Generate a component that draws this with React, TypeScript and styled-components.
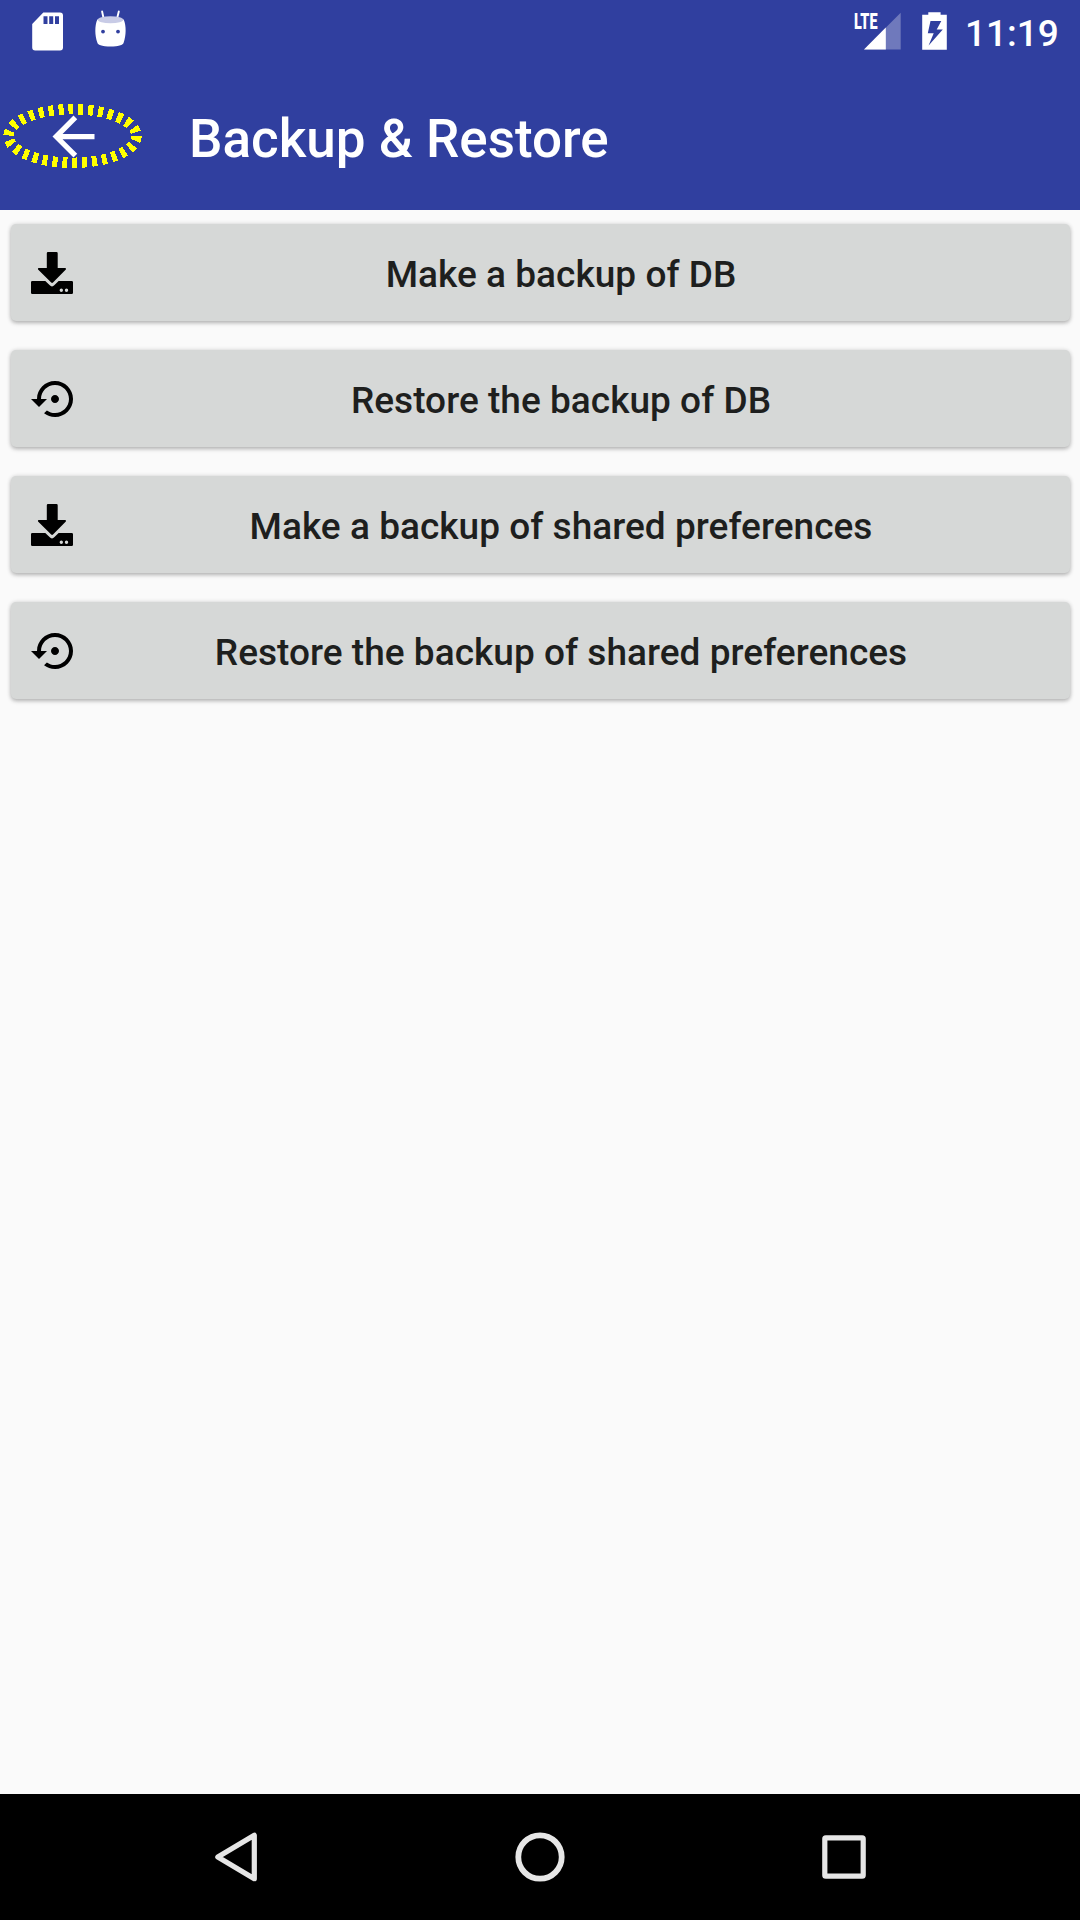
import React from "react";
import styled, { createGlobalStyle } from "styled-components";

const GlobalStyle = createGlobalStyle`
  * { box-sizing: border-box; }
  body { margin: 0; background: #fafafa; }
`;

const Screen = styled.div`
  width: 1080px;
  height: 1920px;
  display: flex;
  flex-direction: column;
  overflow: hidden;
  background: #fafafa;
  font-family: Roboto, "Noto Sans", sans-serif;
  font-weight: 500;
`;

const StatusBar = styled.div`
  height: 63px;
  display: flex;
  align-items: flex-start;
  justify-content: space-between;
  padding: 0 21px 0 31px;
  background: #303f9f;
  color: #fff;
`;

const StatusGroup = styled.div<{ $gap: number }>`
  display: flex;
  gap: ${(p) => p.$gap}px;
`;

const Clock = styled.time`
  width: 94px;
  margin-left: -3px;
  font-size: 37px;
  line-height: 43px;
  padding-top: 12px;
  white-space: nowrap;
`;

const AppBar = styled.header`
  height: 147px;
  display: flex;
  align-items: center;
  background: #303f9f;
  color: #fff;
`;

const BackButton = styled.button`
  position: relative;
  width: 147px;
  height: 147px;
  border: 0;
  padding: 0 0 0 42px;
  background: none;
  color: inherit;
  display: flex;
  align-items: center;
`;

const FocusRing = styled.svg`
  position: absolute;
  left: 0;
  top: 37px;
`;

const Title = styled.h1`
  margin: 0;
  padding: 5px 0 0 42px;
  font-size: 53px;
  line-height: 62px;
  font-weight: 500;
  white-space: nowrap;
`;

const Content = styled.main`
  flex: 1;
  display: flex;
  flex-direction: column;
  gap: 29px;
  padding: 14px 10.5px;
`;

const ActionButton = styled.button`
  height: 97px;
  display: flex;
  align-items: center;
  border: 0;
  border-radius: 5px;
  padding: 0 20.5px;
  background: #d6d8d7;
  color: #1e1f1e;
  font: 500 37px/43px Roboto, "Noto Sans", sans-serif;
  letter-spacing: 0.03px;
  box-shadow: 0 2px 4px rgba(0, 0, 0, 0.26), 0 0 5px rgba(0, 0, 0, 0.1);
`;

const Label = styled.span`
  flex: 1;
  padding-top: 3px;
  text-align: center;
  white-space: nowrap;
`;

const NavBar = styled.nav`
  height: 126px;
  display: flex;
  justify-content: center;
  background: #000;
`;

const NavButton = styled.button`
  width: 304px;
  border: 0;
  padding: 0;
  background: none;
  color: #e6e6e6;
  display: flex;
  align-items: center;
  justify-content: center;
`;

const SdCard = () => (
  <svg width="33" height="63" viewBox="31 0 33 63">
    <path fill="#fff" fillRule="evenodd" d="M43.3 12.4H60a3 3 0 0 1 3 3V47.5a3 3 0 0 1-3 3H35.2a3 3 0 0 1-3-3V24zM43.5 16.3V24h4v-7.7zM49.2 16.3V24h4v-7.7zM55 16.3V24h4v-7.7z" />
  </svg>
);

const AndroidHead = () => (
  <svg width="33" height="63" viewBox="94 0 33 63">
    <path stroke="#fff" strokeWidth="1.9" strokeLinecap="round" d="M102.1 11.5l1.4 6.5M118.8 11.5l-1.6 6.5" />
    <path fill="#fff" d="M97.3 19.5C94.6 26 94.8 35 97.3 42.5c.5 1.4 1.1 2 2.4 2.4 6.8 2.2 14.8 2.2 21.6 0 1.3-.4 1.9-1 2.4-2.4 2.5-7.5 2.7-16.5 0-23z" />
    <ellipse cx="110.5" cy="19.7" rx="12.8" ry="3.5" fill="#c8cbe6" />
    <circle cx="103" cy="31.6" r="1.9" fill="#303f9f" />
    <circle cx="118" cy="31.6" r="1.9" fill="#303f9f" />
  </svg>
);

const NetworkLabel = styled.span`
  position: absolute;
  left: 0;
  top: 9px;
  font: 900 22.5px/24px Roboto, sans-serif;
  transform: scaleX(0.64);
  transform-origin: left;
`;

const Network = styled.div`
  position: relative;
  width: 47px;
`;

const Signal = () => (
  <Network>
    <svg width="47" height="63" viewBox="854 0 47 63">
      <path fill="#6f79bc" d="M900.7 12.7V49.5H864z" />
      <path fill="#fff" d="M885.8 27.6V49.5H864z" />
    </svg>
    <NetworkLabel>LTE</NetworkLabel>
  </Network>
);

const Battery = () => (
  <svg width="25" height="63" viewBox="922 0 25 63">
    <path fill="#fff" fillRule="evenodd" d="M928.3 12.2h12.3v2.6h6.2v35h-24.6v-35h6.1zM930.5 21l-2.7 12.3h5.9L928.6 45.6 942.8 29.4h-6.1L941.3 21z" />
  </svg>
);

const BackArrow = () => (
  <svg width="63" height="63" viewBox="0 0 24 24" fill="currentColor">
    <path d="M20 11H7.83l5.59-5.59L12 4l-8 8 8 8 1.41-1.41L7.83 13H20v-2z" />
  </svg>
);

const DownloadIcon = () => (
  <svg width="42" height="48" viewBox="0 0 42 48">
    <path d="M17 3h8.5a1.2 1.2 0 0 1 1.2 1.2V19h7.2c1 0 1.4 1 .7 1.7L22 33.6a1.3 1.3 0 0 1-1.8 0L7.3 20.7C6.6 20 7 19 8 19h7.8V4.2A1.2 1.2 0 0 1 17 3z" />
    <path fillRule="evenodd" d="M1.3 32h13l4.2 4.1a3.5 3.5 0 0 0 5 0l4.1-4.1h13.1A1.3 1.3 0 0 1 42 33.3v10.4a1.3 1.3 0 0 1-1.3 1.3H1.3A1.3 1.3 0 0 1 0 43.7V33.3A1.3 1.3 0 0 1 1.3 32zM30.3 39.5a1.7 1.7 0 1 0 0 3.4 1.7 1.7 0 0 0 0-3.4zM35.5 39.5a1.7 1.7 0 1 0 0 3.4 1.7 1.7 0 0 0 0-3.4z" />
  </svg>
);

const RestoreIcon = () => (
  <svg width="42" height="48" viewBox="0 0 21 24">
    <path d="M14 12c0-1.1-.9-2-2-2s-2 .9-2 2 .9 2 2 2 2-.9 2-2zm-2-9c-4.97 0-9 4.03-9 9H0l4 4 4-4H5c0-3.87 3.13-7 7-7s7 3.13 7 7-3.13 7-7 7c-1.51 0-2.91-.49-4.06-1.3l-1.42 1.44C8.04 20.3 9.94 21 12 21c4.97 0 9-4.03 9-9s-4.03-9-9-9z" />
  </svg>
);

const actions = [
  { label: "Make a backup of DB", Icon: DownloadIcon },
  { label: "Restore the backup of DB", Icon: RestoreIcon },
  { label: "Make a backup of shared preferences", Icon: DownloadIcon },
  { label: "Restore the backup of shared preferences", Icon: RestoreIcon },
];

export default function App() {
  return (
    <Screen>
      <GlobalStyle />
      <StatusBar>
        <StatusGroup $gap={30}>
          <SdCard />
          <AndroidHead />
        </StatusGroup>
        <StatusGroup $gap={21}>
          <Signal />
          <Battery />
          <Clock>11:19</Clock>
        </StatusGroup>
      </StatusBar>
      <AppBar>
        <BackButton>
          <BackArrow />
          <FocusRing width="147" height="72" viewBox="0 0 147 72" shapeRendering="crispEdges">
            <ellipse cx="72.5" cy="36" rx="64" ry="26.8" fill="none" stroke="#ff0" strokeWidth="10.5" strokeDasharray="5 4.93" />
          </FocusRing>
        </BackButton>
        <Title>Backup &amp; Restore</Title>
      </AppBar>
      <Content>
        {actions.map(({ label, Icon }) => (
          <ActionButton key={label}>
            <Icon />
            <Label>{label}</Label>
          </ActionButton>
        ))}
      </Content>
      <NavBar>
        <NavButton>
          <svg width="60" height="60" viewBox="0 0 60 60" fill="none" stroke="currentColor" strokeWidth="5.2" strokeLinejoin="round">
            <path d="M48.3 8.3v43.4L11.8 30z" />
          </svg>
        </NavButton>
        <NavButton>
          <svg width="60" height="60" viewBox="0 0 60 60" fill="none" stroke="currentColor" strokeWidth="5.8">
            <circle cx="30" cy="30" r="21.7" />
          </svg>
        </NavButton>
        <NavButton>
          <svg width="60" height="60" viewBox="0 0 60 60" fill="none" stroke="currentColor" strokeWidth="5.2" strokeLinejoin="round">
            <rect x="10.8" y="10.8" width="38.4" height="38.4" rx="1" />
          </svg>
        </NavButton>
      </NavBar>
    </Screen>
  );
}
